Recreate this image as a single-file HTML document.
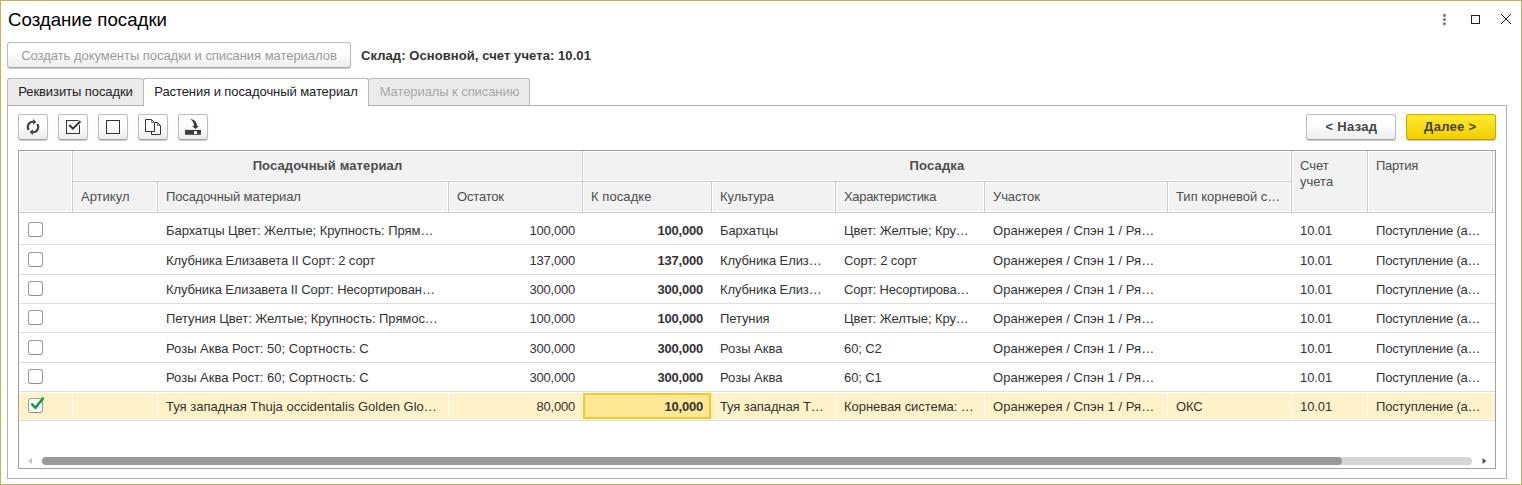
<!DOCTYPE html>
<html lang="ru">
<head>
<meta charset="utf-8">
<title>Создание посадки</title>
<style>
html,body{margin:0;padding:0;}
body{width:1522px;height:485px;overflow:hidden;background:#fff;font-family:"Liberation Sans",sans-serif;font-size:13px;color:#333;position:relative;}
.abs{position:absolute;box-sizing:border-box;}
#frame{left:0;top:0;width:1522px;height:485px;border:1px solid #c3b35d;z-index:50;pointer-events:none;}
#title{left:8px;top:9px;font-size:18.67px;color:#000;line-height:22px;white-space:nowrap;}
.btn{border:1px solid #bcbcbc;border-bottom-color:#a6a6a6;border-radius:3px;background:linear-gradient(#ffffff 40%,#ececec);box-shadow:0 1px 1px rgba(0,0,0,.22);text-align:center;white-space:nowrap;}
#create{left:7px;top:42px;width:344px;height:26px;line-height:25px;color:#9b9b9b;letter-spacing:-.04px;}
#sklad{left:361px;top:48px;font-weight:bold;color:#333;letter-spacing:.08px;line-height:16px;white-space:nowrap;}
.tab{top:78px;height:27px;border:1px solid #b9b9b9;border-bottom:none;background:#ebebeb;line-height:25px;color:#222;text-align:center;white-space:nowrap;border-radius:3px 3px 0 0;letter-spacing:-.08px;}
.tab.act{top:78px;height:28px;background:#fff;color:#222;line-height:25px;}
#panel{left:7px;top:105px;width:1500px;height:374px;border:1px solid #b2b2b2;background:#fff;}
.ib{top:114px;width:30px;height:26px;}
.ib svg{position:absolute;left:-1px;top:-1px;}
#back{left:1306px;top:114px;width:90px;height:26px;line-height:23.5px;padding-left:1px;font-weight:bold;color:#444;letter-spacing:.3px;}
#next{left:1406px;top:114px;width:90px;height:26px;line-height:23.5px;padding-right:1.5px;font-weight:bold;color:#444;letter-spacing:.3px;background:linear-gradient(#ffe92e,#f3cf00);border-color:#c9ab00;border-bottom-color:#b59a00;}
#tbl{left:18px;top:150px;width:1478px;height:319px;border:1px solid #a0a0a0;background:#fff;overflow:hidden;}
#hdr{left:0;top:0;width:1476px;height:62px;background:#c9c9c9;}
.hc{background:#f2f2f2;border:1px solid #fff;color:#4d4d4d;white-space:nowrap;overflow:hidden;line-height:16px;padding:6px 0 0 7px;}
.hc.g{font-weight:bold;text-align:center;padding-left:0;}
.hc.r2{padding-top:6px;}
.sep{left:0;width:1476px;height:1px;background:#dedede;}
.c{white-space:nowrap;overflow:hidden;line-height:16px;height:16px;letter-spacing:-.1px;}
.r{text-align:right;letter-spacing:-.2px;}
.b{font-weight:bold;}
.cb{left:9px;width:15px;height:15px;border:1px solid #9a9a9a;border-bottom-color:#8c8c8c;border-radius:3px;background:#fff;}
#sel{left:0;width:1476px;background:#fff2c8;}
.vs{top:0;width:1px;height:100%;background:#fffdf4;}
#act{border:2px solid #fac720;background:#fee795;}
</style>
</head>
<body>
<div id="title" class="abs">Создание посадки</div>
<svg class="abs" style="left:1430px;top:8px" width="90" height="24" viewBox="0 0 90 24"><circle cx="14.45" cy="7.4" r="1.55" fill="#7a7a7a"/><circle cx="14.45" cy="11.55" r="1.55" fill="#7a7a7a"/><circle cx="14.45" cy="15.7" r="1.55" fill="#7a7a7a"/><rect x="41.5" y="7.5" width="8" height="8" fill="none" stroke="#222" stroke-width="1"/><path d="M71 6 L81 16 M81 6 L71 16" stroke="#222" stroke-width="1" fill="none"/></svg>
<div id="create" class="abs btn">Создать документы посадки и списания материалов</div>
<div id="sklad" class="abs">Склад: Основной, счет учета: 10.01</div>
<div id="panel" class="abs"></div>
<div class="abs tab" style="left:7px;width:137px;">Реквизиты посадки</div>
<div class="abs tab" style="left:368px;width:162px;color:#a8a8a8;padding-left:1px">Материалы к списанию</div>
<div class="abs tab act" style="left:143px;width:226px;">Растения и посадочный материал</div>
<div class="abs btn ib" style="left:18px"><svg width="30" height="26" viewBox="0 0 30 26"><g fill="none" stroke="#3c3c3c" stroke-width="2.1"><path d="M10.74 15.98 A5.2 5.2 0 0 1 15.18 7.8"/><path d="M19.26 10.02 A5.2 5.2 0 0 1 14.82 18.2"/></g><path d="M15.1 4.9 L18.3 7.9 L15.1 10.8 Z" fill="#3c3c3c"/><path d="M14.9 15.2 L11.7 18.1 L14.9 21 Z" fill="#3c3c3c"/></svg></div>
<div class="abs btn ib" style="left:58px"><svg width="30" height="26" viewBox="0 0 30 26"><rect x="8.5" y="6.5" width="13" height="13" fill="none" stroke="#333" stroke-width="1"/><path d="M19 10.6 L22.6 7.1" fill="none" stroke="#fbfbfb" stroke-width="4"/><path d="M11.2 11 L14.9 14.6 L22.4 7.3" fill="none" stroke="#333" stroke-width="2"/></svg></div>
<div class="abs btn ib" style="left:98px"><svg width="30" height="26" viewBox="0 0 30 26"><rect x="8.5" y="6.5" width="13" height="13" fill="none" stroke="#333" stroke-width="1"/></svg></div>
<div class="abs btn ib" style="left:138px"><svg width="30" height="26" viewBox="0 0 30 26"><g fill="#fbfbfb" stroke="#333" stroke-width="1"><path d="M13.5 8.5 H19.5 L22.5 11.5 V20.5 H13.5 Z"/><path d="M7.5 5.5 H13.5 L16.5 8.5 V17.5 H7.5 Z"/></g><path d="M13.5 5.5 V8.5 H16.5 M19.5 8.5 V11.5 H22.5" fill="none" stroke="#666" stroke-width=".9"/></svg></div>
<div class="abs btn ib" style="left:178px"><svg width="30" height="26" viewBox="0 0 30 26"><rect x="7" y="15.9" width="15.95" height="4.85" fill="#3c3c3c"/><rect x="16" y="17.2" width="3.05" height="2.75" fill="#fff"/><path d="M12.2 5.2 C16.5 5.2 19 7.6 19 12.1 L20.9 12.1 L17.5 14.9 L14.1 12.1 L16 12.1 C16 9 15 6.8 12.2 5.2 Z" fill="#3c3c3c"/></svg></div>
<div id="back" class="abs btn">&lt; Назад</div>
<div id="next" class="abs btn">Далее &gt;</div>
<div id="tbl" class="abs">
<div id="hdr" class="abs">
<div class="abs hc " style="left:0px;top:0px;width:53px;height:61px"></div>
<div class="abs hc g" style="left:54px;top:0px;width:509px;height:30px;letter-spacing:0.12px">Посадочный материал</div>
<div class="abs hc g" style="left:564px;top:0px;width:708px;height:30px;letter-spacing:0.17px">Посадка</div>
<div class="abs hc " style="left:1273px;top:0px;width:75px;height:61px">Счет<br>учета</div>
<div class="abs hc " style="left:1349px;top:0px;width:124px;height:61px;letter-spacing:-0.3px">Партия</div>
<div class="abs hc " style="left:1474px;top:0px;width:7px;height:61px"></div>
<div class="abs hc r2" style="left:54px;top:31px;width:84px;height:30px">Артикул</div>
<div class="abs hc r2" style="left:139px;top:31px;width:290px;height:30px;letter-spacing:-0.13px">Посадочный материал</div>
<div class="abs hc r2" style="left:430px;top:31px;width:133px;height:30px;letter-spacing:-0.18px">Остаток</div>
<div class="abs hc r2" style="left:564px;top:31px;width:128px;height:30px;letter-spacing:0.08px">К посадке</div>
<div class="abs hc r2" style="left:693px;top:31px;width:123px;height:30px">Культура</div>
<div class="abs hc r2" style="left:817px;top:31px;width:148px;height:30px;letter-spacing:-0.32px">Характеристика</div>
<div class="abs hc r2" style="left:966px;top:31px;width:182px;height:30px;letter-spacing:-0.1px">Участок</div>
<div class="abs hc r2" style="left:1149px;top:31px;width:123px;height:30px">Тип корневой с…</div>
</div>
<div id="sel" class="abs" style="top:242px;height:26px">
<div class="abs vs" style="left:53px"></div>
<div class="abs vs" style="left:138px"></div>
<div class="abs vs" style="left:429px"></div>
<div class="abs vs" style="left:563px"></div>
<div class="abs vs" style="left:816px"></div>
<div class="abs vs" style="left:965px"></div>
<div class="abs vs" style="left:1148px"></div>
<div class="abs vs" style="left:1272px"></div>
<div class="abs vs" style="left:1348px"></div>
<div class="abs vs" style="left:1473px"></div>
</div>
<div id="act" class="abs" style="left:564px;top:242px;width:128px;height:26px"></div>
<div class="abs sep" style="top:93px"></div>
<div class="abs sep" style="top:123px"></div>
<div class="abs sep" style="top:152px"></div>
<div class="abs sep" style="top:181px"></div>
<div class="abs sep" style="top:211px"></div>
<div class="abs sep" style="top:240px"></div>
<div class="abs sep" style="top:269px"></div>
<div class="abs cb" style="top:71px"></div>
<div class="abs c" style="left:147px;top:72px;width:274px;letter-spacing:-0.05px">Бархатцы Цвет: Желтые; Крупность: Прям…</div>
<div class="abs c r" style="left:430px;top:72px;width:126px">100,000</div>
<div class="abs c r b" style="left:564px;top:72px;width:120px">100,000</div>
<div class="abs c" style="left:701px;top:72px;width:107px">Бархатцы</div>
<div class="abs c" style="left:825px;top:72px;width:132px">Цвет: Желтые; Кру…</div>
<div class="abs c" style="left:974px;top:72px;width:166px;letter-spacing:0.04px">Оранжерея / Спэн 1 / Ря…</div>
<div class="abs c" style="left:1281px;top:72px;width:59px">10.01</div>
<div class="abs c" style="left:1357px;top:72px;width:108px;letter-spacing:-0.2px">Поступление (а…</div>
<div class="abs cb" style="top:101px"></div>
<div class="abs c" style="left:147px;top:102px;width:274px;letter-spacing:-0.1px">Клубника Елизавета II Сорт: 2 сорт</div>
<div class="abs c r" style="left:430px;top:102px;width:126px">137,000</div>
<div class="abs c r b" style="left:564px;top:102px;width:120px">137,000</div>
<div class="abs c" style="left:701px;top:102px;width:107px">Клубника Елиз…</div>
<div class="abs c" style="left:825px;top:102px;width:132px">Сорт: 2 сорт</div>
<div class="abs c" style="left:974px;top:102px;width:166px;letter-spacing:0.04px">Оранжерея / Спэн 1 / Ря…</div>
<div class="abs c" style="left:1281px;top:102px;width:59px">10.01</div>
<div class="abs c" style="left:1357px;top:102px;width:108px;letter-spacing:-0.2px">Поступление (а…</div>
<div class="abs cb" style="top:130px"></div>
<div class="abs c" style="left:147px;top:131px;width:274px;letter-spacing:-0.135px">Клубника Елизавета II Сорт: Несортирован…</div>
<div class="abs c r" style="left:430px;top:131px;width:126px">300,000</div>
<div class="abs c r b" style="left:564px;top:131px;width:120px">300,000</div>
<div class="abs c" style="left:701px;top:131px;width:107px">Клубника Елиз…</div>
<div class="abs c" style="left:825px;top:131px;width:132px;letter-spacing:-0.2px">Сорт: Несортирова…</div>
<div class="abs c" style="left:974px;top:131px;width:166px;letter-spacing:0.04px">Оранжерея / Спэн 1 / Ря…</div>
<div class="abs c" style="left:1281px;top:131px;width:59px">10.01</div>
<div class="abs c" style="left:1357px;top:131px;width:108px;letter-spacing:-0.2px">Поступление (а…</div>
<div class="abs cb" style="top:159px"></div>
<div class="abs c" style="left:147px;top:160px;width:274px;letter-spacing:-0.065px">Петуния Цвет: Желтые; Крупность: Прямос…</div>
<div class="abs c r" style="left:430px;top:160px;width:126px">100,000</div>
<div class="abs c r b" style="left:564px;top:160px;width:120px">100,000</div>
<div class="abs c" style="left:701px;top:160px;width:107px">Петуния</div>
<div class="abs c" style="left:825px;top:160px;width:132px">Цвет: Желтые; Кру…</div>
<div class="abs c" style="left:974px;top:160px;width:166px;letter-spacing:0.04px">Оранжерея / Спэн 1 / Ря…</div>
<div class="abs c" style="left:1281px;top:160px;width:59px">10.01</div>
<div class="abs c" style="left:1357px;top:160px;width:108px;letter-spacing:-0.2px">Поступление (а…</div>
<div class="abs cb" style="top:189px"></div>
<div class="abs c" style="left:147px;top:190px;width:274px;letter-spacing:0px">Розы Аква Рост: 50; Сортность: С</div>
<div class="abs c r" style="left:430px;top:190px;width:126px">300,000</div>
<div class="abs c r b" style="left:564px;top:190px;width:120px">300,000</div>
<div class="abs c" style="left:701px;top:190px;width:107px;letter-spacing:0px">Розы Аква</div>
<div class="abs c" style="left:825px;top:190px;width:132px">60; С2</div>
<div class="abs c" style="left:974px;top:190px;width:166px;letter-spacing:0.04px">Оранжерея / Спэн 1 / Ря…</div>
<div class="abs c" style="left:1281px;top:190px;width:59px">10.01</div>
<div class="abs c" style="left:1357px;top:190px;width:108px;letter-spacing:-0.2px">Поступление (а…</div>
<div class="abs cb" style="top:218px"></div>
<div class="abs c" style="left:147px;top:219px;width:274px;letter-spacing:0px">Розы Аква Рост: 60; Сортность: С</div>
<div class="abs c r" style="left:430px;top:219px;width:126px">300,000</div>
<div class="abs c r b" style="left:564px;top:219px;width:120px">300,000</div>
<div class="abs c" style="left:701px;top:219px;width:107px;letter-spacing:0px">Розы Аква</div>
<div class="abs c" style="left:825px;top:219px;width:132px">60; С1</div>
<div class="abs c" style="left:974px;top:219px;width:166px;letter-spacing:0.04px">Оранжерея / Спэн 1 / Ря…</div>
<div class="abs c" style="left:1281px;top:219px;width:59px">10.01</div>
<div class="abs c" style="left:1357px;top:219px;width:108px;letter-spacing:-0.2px">Поступление (а…</div>
<div class="abs cb" style="top:247px"><svg width="20" height="20" viewBox="0 0 20 20" style="position:absolute;left:-1px;top:-3px;overflow:visible"><path d="M4.1 8.3 L7.5 11.8 L14.9 2.4" fill="none" stroke="#0b9b47" stroke-width="2.5" stroke-linecap="round" stroke-linejoin="round"/></svg></div>
<div class="abs c" style="left:147px;top:248px;width:274px;letter-spacing:0px">Туя западная Thuja occidentalis Golden Glo…</div>
<div class="abs c r" style="left:430px;top:248px;width:126px">80,000</div>
<div class="abs c r b" style="left:564px;top:248px;width:120px">10,000</div>
<div class="abs c" style="left:701px;top:248px;width:107px">Туя западная Т…</div>
<div class="abs c" style="left:825px;top:248px;width:132px;letter-spacing:-0.05px">Корневая система: …</div>
<div class="abs c" style="left:974px;top:248px;width:166px;letter-spacing:0.04px">Оранжерея / Спэн 1 / Ря…</div>
<div class="abs c" style="left:1157px;top:248px;width:107px">ОКС</div>
<div class="abs c" style="left:1281px;top:248px;width:59px">10.01</div>
<div class="abs c" style="left:1357px;top:248px;width:108px;letter-spacing:-0.2px">Поступление (а…</div>
<div class="abs" style="left:23px;top:306px;width:1430px;height:8px;border-radius:4px;background:#d6d6d6"></div>
<div class="abs" style="left:23px;top:306px;width:1300px;height:8px;border-radius:4px;background:#999"></div>
<svg class="abs" style="left:6px;top:305px" width="10" height="10" viewBox="0 0 10 10"><path d="M6.9 2 L3.3 5 L6.9 8 Z" fill="#bcbcbc"/></svg>
<svg class="abs" style="left:1461px;top:305px" width="10" height="10" viewBox="0 0 10 10"><path d="M2.5 2 L6.5 5 L2.5 8 Z" fill="#555"/></svg>
</div>
<div id="frame" class="abs"></div>
</body>
</html>
